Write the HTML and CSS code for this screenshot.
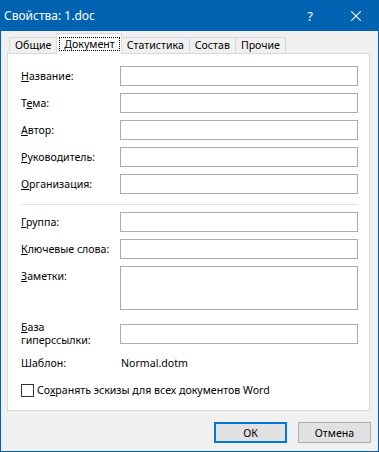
FILE: index.html
```html
<!DOCTYPE html>
<html lang="ru">
<head>
    <meta charset="UTF-8">
    <title>Свойства: 1.doc</title>
    <link rel="stylesheet" href="styles.css">
</head>
<body>
    <div class="window">
        <!-- Заголовок окна -->
        <div class="titlebar">
            <span class="title">Свойства: 1.doc</span>
            <span class="title-btn help">?</span>
            <span class="title-btn close">
                <svg width="10" height="10" viewBox="0 0 10 10"><path d="M0 0L10 10M10 0L0 10" stroke="#fff" stroke-width="1.1"/></svg>
            </span>
        </div>

        <!-- Вкладки -->
        <div class="tabs">
            <div class="tab">Общие</div>
            <div class="tab active"><span>Документ</span></div>
            <div class="tab">Статистика</div>
            <div class="tab">Состав</div>
            <div class="tab">Прочие</div>
        </div>

        <div class="panel">
            <div class="fields">
                <label><u>Н</u>азвание:</label>
                <input type="text">
                <label>Т<u>е</u>ма:</label>
                <input type="text">
                <label><u>А</u>втор:</label>
                <input type="text">
                <label><u>Р</u>уководитель:</label>
                <input type="text">
                <label><u>О</u>рганизация:</label>
                <input type="text">

                <div class="separator"></div>

                <label><u>Г</u>руппа:</label>
                <input type="text">
                <label><u>К</u>лючевые слова:</label>
                <input type="text">
                <label class="top"><u>З</u>аметки:</label>
                <textarea></textarea>
                <label class="two-lines spaced"><u>Б</u>аза<br>гиперссылки:</label>
                <input type="text" class="spaced">
                <span class="static">Шаблон:</span>
                <span class="static value">Normal.dotm</span>
            </div>

            <label class="check">
                <input type="checkbox">
                <span>Со<u>х</u>ранять эскизы для всех документов Word</span>
            </label>
        </div>

        <div class="footer">
            <button class="btn default">ОК</button>
            <button class="btn">Отмена</button>
        </div>
    </div>
</body>
</html>
```

FILE: styles.css
```css
/* Цвета окна Windows 10 */
:root {
    --title-blue: #0063b1;
    --focus-blue: #0078d7;
    --window-bg: #f0f0f0;
    --tab-border: #d9d9d9;
    --field-border: #ababab;
}

* {
    box-sizing: border-box;
}

body {
    margin: 0;
    font-family: "Noto Sans", "Open Sans", sans-serif;
    font-size: 10.6px;
    color: #000;
}

.window {
    width: 379px;
    height: 452px;
    display: flex;
    flex-direction: column;
    background-color: var(--window-bg);
    border: 1px solid var(--title-blue);
    border-top: none;
}

/* --- Заголовок --- */
.titlebar {
    display: flex;
    align-items: center;
    height: 31px;
    margin: 0 -1px;
    background-color: var(--title-blue);
    color: #fff;
    font-size: 12px;
}

.title {
    flex: 1;
    padding-left: 4px;
}

.title-btn {
    width: 46px;
    height: 31px;
    display: flex;
    align-items: center;
    justify-content: center;
}

.help {
    font-size: 13px;
}

/* --- Вкладки --- */
.tabs {
    display: flex;
    align-items: flex-end;
    height: 20px;
    margin: 2px 0 0 8px;
}

.tab {
    height: 16px;
    padding: 0 5px;
    line-height: 14px;
    border: 1px solid var(--tab-border);
    border-bottom: none;
    margin-right: -1px;
    background-color: var(--window-bg);
}

.tab.active {
    height: 21px;
    margin-bottom: -1px;
    padding: 3px 1px 0 2px;
    background-color: #fff;
    position: relative;
    z-index: 1;
}

.tab.active span {
    display: block;
    padding: 0 4px;
    line-height: 12px;
    border: 1px dotted #000;
}

/* --- Панель --- */
.panel {
    flex: 1;
    display: flex;
    flex-direction: column;
    margin: 0 8px 0 6px;
    padding: 12px 11px 13px 13px;
    background-color: #fff;
    border: 1px solid var(--tab-border);
    line-height: 13px;
}

.fields {
    display: grid;
    grid-template-columns: 99px 1fr;
    row-gap: 7px;
    align-items: center;
}

.fields input,
.fields textarea {
    height: 20px;
    margin: 0;
    padding: 0 3px;
    border: 1px solid var(--field-border);
    background: #fff;
    font: inherit;
    outline: none;
}

.fields textarea {
    height: 44px;
    resize: none;
}

.separator {
    grid-column: 1 / -1;
    height: 1px;
    margin-top: 3px;
    background-color: #e3e3e3;
}

.fields .top {
    align-self: start;
    padding-top: 4px;
}

.fields .spaced {
    margin-top: 4px;
}

.static {
    margin-top: 3px;
}

.value {
    padding-left: 1px;
}

.check {
    display: flex;
    align-items: center;
    gap: 3px;
    margin-top: auto;
    height: 13px;
}

.check input {
    appearance: none;
    width: 13px;
    height: 13px;
    margin: 0;
    border: 1px solid #333;
    background: #fff;
}

/* --- Кнопки --- */
.footer {
    display: flex;
    justify-content: flex-end;
    gap: 11px;
    padding: 11px 7px 8px;
}

.btn {
    width: 73px;
    height: 21px;
    padding: 0;
    font: inherit;
    color: #000;
    background-color: #e1e1e1;
    border: 1px solid #adadad;
}

.btn.default {
    border: 2px solid var(--focus-blue);
}
```
